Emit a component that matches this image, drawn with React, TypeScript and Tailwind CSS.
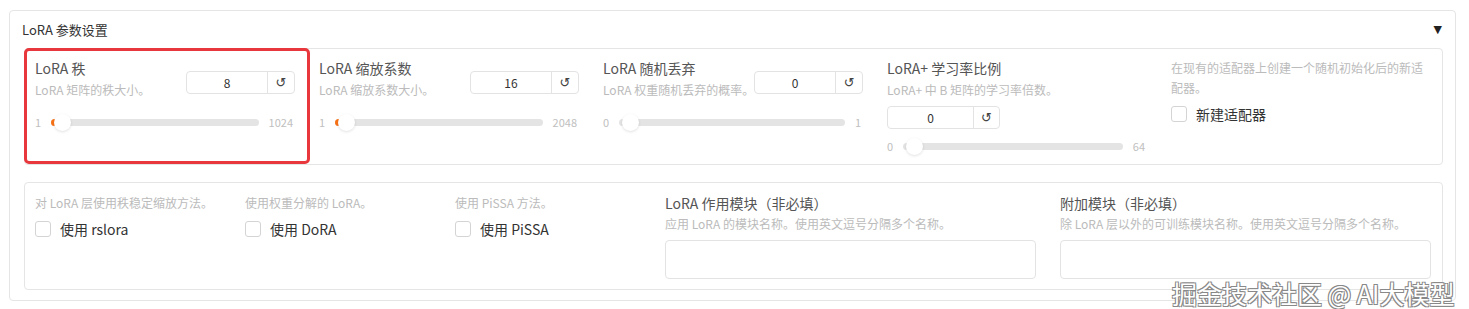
import React from 'react';

const font = "font-['Noto_Sans_CJK_SC','Noto_Sans',sans-serif]";

const NumberBox = ({ value, inputW = 'w-[80px]', btnW = 'w-[27px]' }: { value: string; inputW?: string; btnW?: string }) => (
  <div className="flex h-[23px] rounded-[4px] border border-[#e3e3e3] bg-white">
    <div className={`${inputW} flex items-center justify-center text-[12px] text-[#333]`}>{value}</div>
    <div className={`${btnW} flex items-center justify-center border-l border-[#e3e3e3] text-[13px] text-[#444] font-['DejaVu_Sans',sans-serif]`}>↺</div>
  </div>
);

const Slider = ({ min, max, filled }: { min: string; max: string; filled?: boolean }) => (
  <div className="flex h-[16px] items-center gap-[10px] text-[11px] text-[#c0c0c0]">
    <span>{min}</span>
    <div className="relative h-[7px] flex-1 rounded-full bg-[#e4e4e4]">
      {filled && <div className="absolute left-0 top-0 h-full w-[6px] rounded-l-full bg-[#f97316]" />}
      <div className="absolute left-[3px] top-[-5px] h-[17px] w-[17px] rounded-full bg-white shadow-[0_1px_3px_rgba(0,0,0,0.12)]" />
    </div>
    <span className="pr-[2px]">{max}</span>
  </div>
);

const Checkbox = ({ label }: { label: string }) => (
  <div className="flex items-center gap-[9px]">
    <div className="h-[16px] w-[16px] rounded-[3px] border border-[#d4d4d4] bg-white" />
    <span className="text-[14px] leading-[20px] text-[#333]">{label}</span>
  </div>
);

const params = [
  { label: 'LoRA 秩', desc: 'LoRA 矩阵的秩大小。', value: '8', min: '1', max: '1024', filled: true },
  { label: 'LoRA 缩放系数', desc: 'LoRA 缩放系数大小。', value: '16', min: '1', max: '2048', filled: true },
  { label: 'LoRA 随机丢弃', desc: 'LoRA 权重随机丢弃的概率。', value: '0', min: '0', max: '1', filled: false },
];

const checks = [
  { desc: '对 LoRA 层使用秩稳定缩放方法。', label: '使用 rslora' },
  { desc: '使用权重分解的 LoRA。', label: '使用 DoRA' },
  { desc: '使用 PiSSA 方法。', label: '使用 PiSSA' },
];

const texts = [
  { label: 'LoRA 作用模块（非必填）', desc: '应用 LoRA 的模块名称。使用英文逗号分隔多个名称。' },
  { label: '附加模块（非必填）', desc: '除 LoRA 层以外的可训练模块名称。使用英文逗号分隔多个名称。' },
];

export default function App() {
  return (
    <div className={`relative h-[309px] w-full bg-white ${font}`}>
      <div className="ml-[9px] mr-[13px] mt-[10px] rounded-[4px] border border-[#e5e5e5] pb-[10px]">
        {/* header */}
        <div className="flex items-center justify-between pl-[12px] pr-[13px] pt-[9px]">
          <span className="text-[13px] leading-[20px] text-[#333]">LoRA 参数设置</span>
          <span className="text-[11px] leading-[20px] text-[#222] font-['DejaVu_Sans',sans-serif]">▼</span>
        </div>

        {/* numeric params */}
        <div className="relative ml-[14px] mr-[12px] mt-[8px] rounded-[4px] border border-[#e5e5e5] pb-[10px] pl-[10px] pt-[9px]">
          <div className="flex gap-[24px]">
            {params.map((p) => (
              <div key={p.label} className="w-[260px]">
                <div className="flex items-start justify-between">
                  <div>
                    <p className="text-[14px] leading-[20px] text-[#555]">{p.label}</p>
                    <p className="mt-[2px] whitespace-nowrap text-[12px] leading-[20px] text-[#bbb]">{p.desc}</p>
                  </div>
                  <div className="mt-[13px] shrink-0">
                    <NumberBox value={p.value} />
                  </div>
                </div>
                <div className="mt-[14px]">
                  <Slider min={p.min} max={p.max} filled={p.filled} />
                </div>
              </div>
            ))}

            <div className="w-[260px]">
              <p className="text-[14px] leading-[20px] text-[#555]">LoRA+ 学习率比例</p>
              <p className="mt-[2px] text-[12px] leading-[20px] text-[#bbb]">LoRA+ 中 B 矩阵的学习率倍数。</p>
              <div className="mt-[6px] flex">
                <NumberBox value="0" inputW="w-[85px]" btnW="w-[26px]" />
              </div>
              <div className="mt-[9px]">
                <Slider min="0" max="64" />
              </div>
            </div>

            <div className="w-[260px]">
              <p className="text-[12px] leading-[20px] text-[#bbb]">在现有的适配器上创建一个随机初始化后的新适配器。</p>
              <div className="mt-[6px]">
                <Checkbox label="新建适配器" />
              </div>
            </div>
          </div>

          {/* highlight annotation */}
          <div className="absolute left-[-1px] top-[-1px] h-[116px] w-[286px] rounded-[5px] border-[3px] border-[#e8383d]" />
        </div>

        {/* options */}
        <div className="ml-[14px] mr-[12px] mt-[17px] rounded-[4px] border border-[#e5e5e5] pb-[10px] pl-[10px] pt-[10px]">
          <div className="flex gap-[24px]">
            {checks.map((c) => (
              <div key={c.label} className="w-[186px]">
                <p className="whitespace-nowrap text-[12px] leading-[20px] text-[#bbb]">{c.desc}</p>
                <div className="mt-[6px]">
                  <Checkbox label={c.label} />
                </div>
              </div>
            ))}
            {texts.map((t) => (
              <div key={t.label} className="w-[371px]">
                <p className="text-[14px] leading-[20px] text-[#555]">{t.label}</p>
                <p className="mt-[1px] text-[12px] leading-[20px] text-[#bbb]">{t.desc}</p>
                <div className="mt-[6px] h-[39px] rounded-[4px] border border-[#e3e3e3] bg-white" />
              </div>
            ))}
          </div>
        </div>
      </div>

      {/* watermark */}
      <div className="absolute left-[1172px] top-[268px] text-[25px] leading-[30px] text-white [text-shadow:-1px_-1px_0_#888,1px_-1px_0_#888,-1px_1px_0_#888,1px_1px_0_#888]">
        掘金技术社区 @ AI大模型
      </div>
    </div>
  );
}
